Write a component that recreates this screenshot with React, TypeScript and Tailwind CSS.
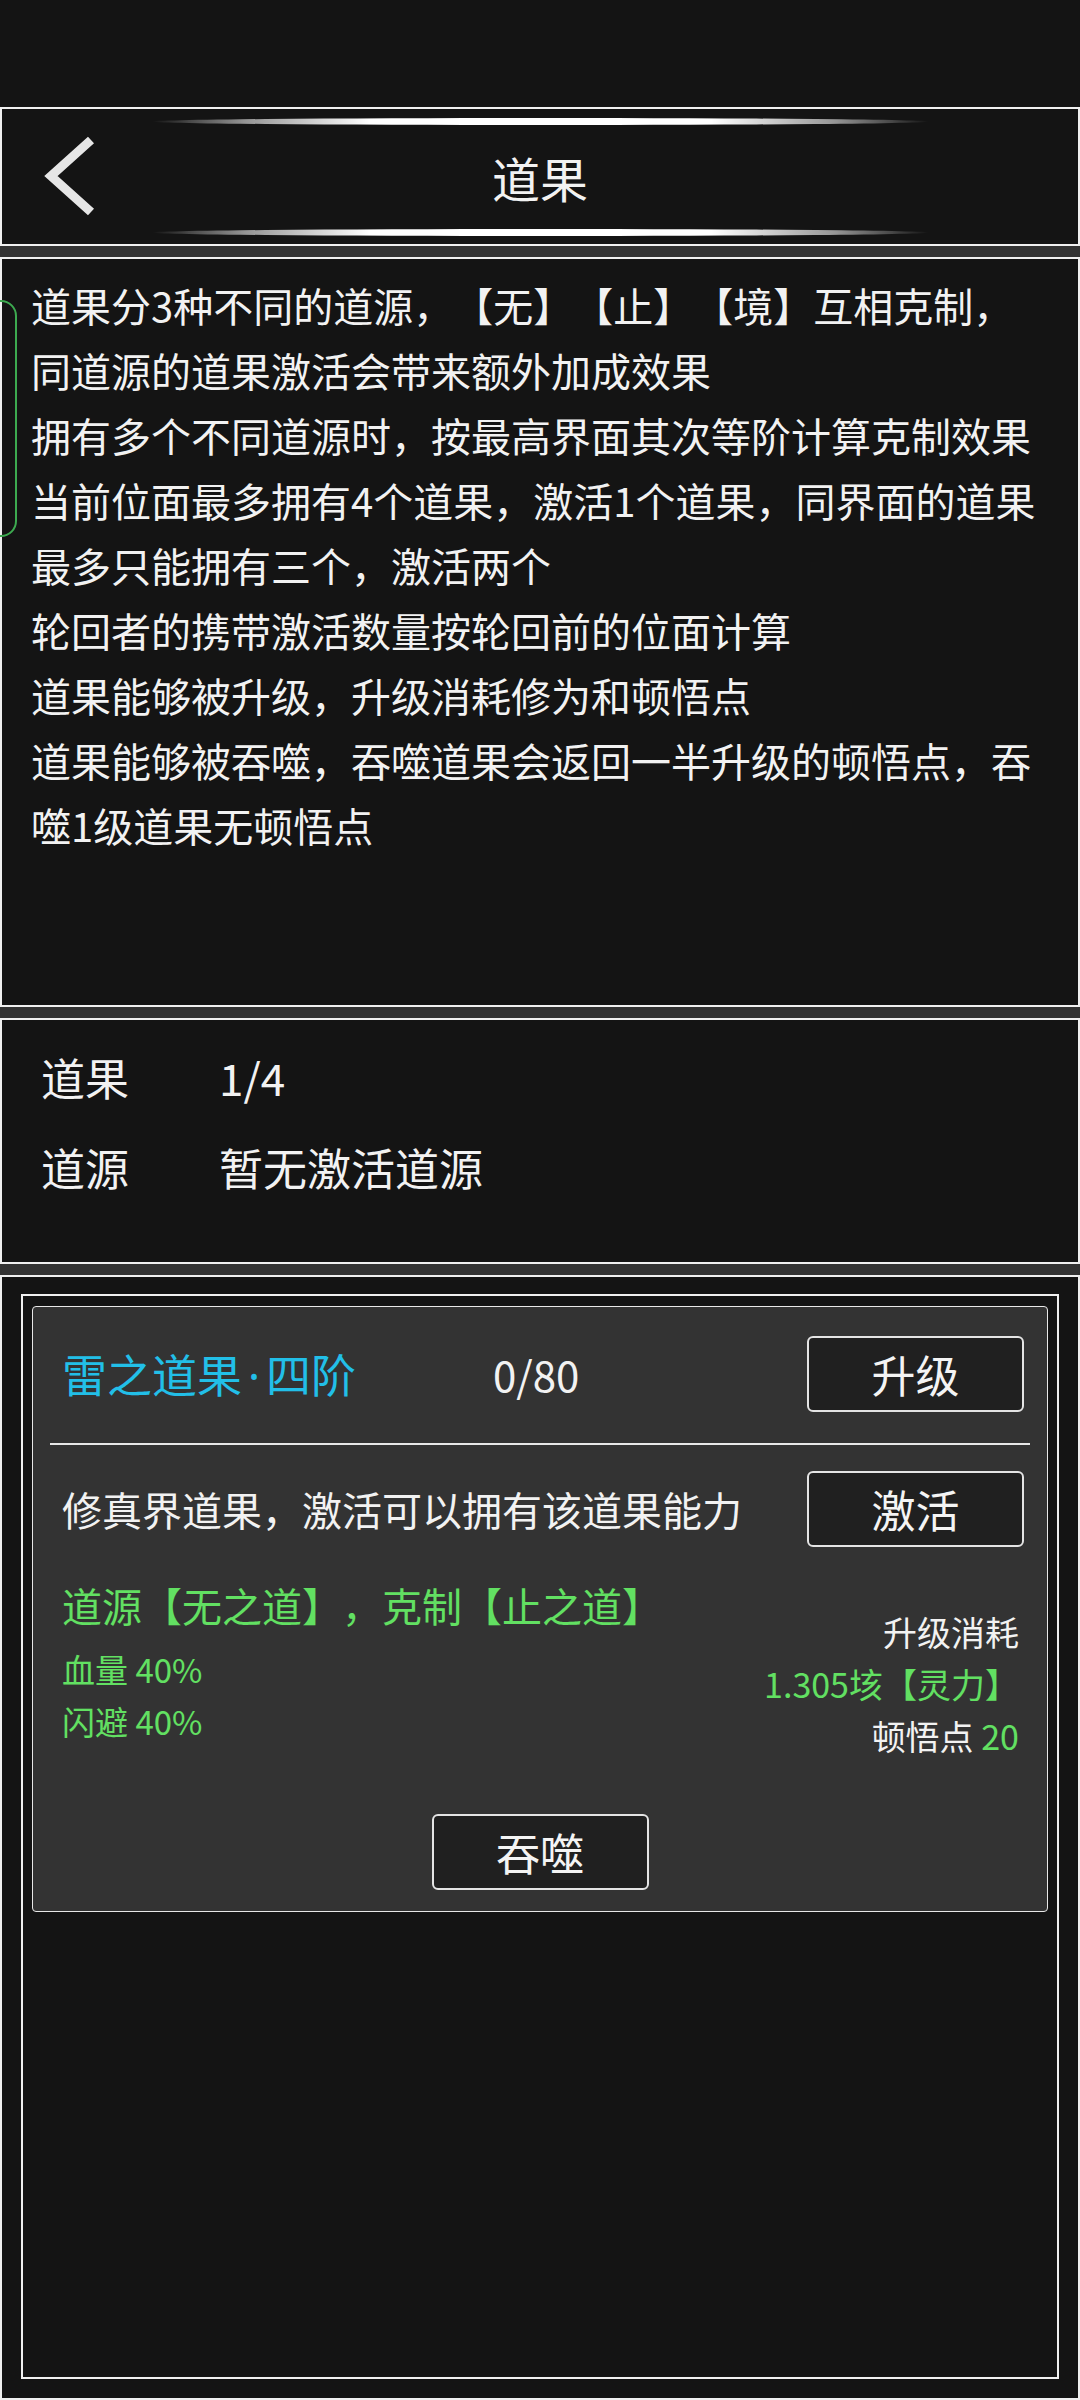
import type { JSX } from "react"

const descLines: string[] = [
  "道果分3种不同的道源，【无】【止】【境】互相克制，",
  "同道源的道果激活会带来额外加成效果",
  "拥有多个不同道源时，按最高界面其次等阶计算克制效果",
  "当前位面最多拥有4个道果，激活1个道果，同界面的道果",
  "最多只能拥有三个，激活两个",
  "轮回者的携带激活数量按轮回前的位面计算",
  "道果能够被升级，升级消耗修为和顿悟点",
  "道果能够被吞噬，吞噬道果会返回一半升级的顿悟点，吞",
  "噬1级道果无顿悟点",
]

const Glow = (): JSX.Element => (
  <div className="h-[7px] w-[777px] shrink-0 rounded-[50%] bg-[linear-gradient(90deg,rgba(255,255,255,0)_0%,rgba(255,255,255,0.55)_12%,#ffffff_28%,#ffffff_72%,rgba(255,255,255,0.55)_88%,rgba(255,255,255,0)_100%)]" />
)

const Divider = (): JSX.Element => <div className="h-[11px] shrink-0 bg-[#333333]" />

const GameButton = ({ label }: { label: string }): JSX.Element => (
  <button className="flex h-[76px] w-[217px] shrink-0 items-center justify-center rounded-[6px] border-2 border-[#e4e4e4] bg-[#202020] text-[44px] leading-none text-[#f4f4f4]">
    {label}
  </button>
)

const App = (): JSX.Element => {
  return (
    <div className="relative flex h-[2400px] w-[1080px] flex-col overflow-hidden bg-[#141414] font-['Noto_Sans_CJK_SC','Noto_Sans',sans-serif] text-[#f2f2f2] [text-spacing-trim:space-all]">
      <div className="h-[107px] shrink-0" />

      {/* header */}
      <header className="relative flex h-[139px] shrink-0 flex-col items-center border-2 border-[#f0f0f0] pt-[9px] pb-[8px]">
        <Glow />
        <div className="flex flex-1 items-center justify-center text-[48px] leading-none">道果</div>
        <Glow />
        <svg
          className="absolute left-[38px] top-[27px]"
          width="58"
          height="80"
          viewBox="0 0 58 80"
          fill="none"
        >
          <polyline
            points="51,4 11,40 51,76"
            stroke="#e6e6e6"
            strokeWidth="9"
            strokeLinejoin="miter"
            strokeLinecap="butt"
          />
        </svg>
      </header>

      <Divider />

      {/* rules */}
      <section className="h-[750px] shrink-0 border-2 border-[#f0f0f0] pt-[14px] pl-[29px] text-[40px] leading-[65px]">
        {descLines.map((line, idx) => (
          <div key={idx} className="whitespace-nowrap">
            {line}
          </div>
        ))}
      </section>

      <Divider />

      {/* summary */}
      <section className="h-[246px] shrink-0 border-2 border-[#f0f0f0] pt-[12px] pl-[39px] text-[44px]">
        <div className="flex h-[90px] items-center">
          <span className="w-[178px]">道果</span>
          <span>1/4</span>
        </div>
        <div className="flex h-[90px] items-center">
          <span className="w-[178px]">道源</span>
          <span>暂无激活道源</span>
        </div>
      </section>

      <Divider />

      {/* list */}
      <section className="flex-1 border-2 border-[#f0f0f0] px-[19px] pt-[17px]">
        <div className="h-[1085px] border-2 border-[#f0f0f0] px-[9px] pt-[10px]">
          <div className="flex h-[606px] flex-col rounded-[4px] border border-[#e8e8e8] bg-[#333333]">
            <div className="mt-[29px] flex h-[76px] items-center pr-[23px] pl-[29px]">
              <span className="w-[431px] text-[45px] leading-none text-[#22bfe8]">
                雷之道果<span className="px-[6px] font-['Noto_Sans',sans-serif]">·</span>四阶
              </span>
              <span className="flex-1 text-[42px] leading-none">0/80</span>
              <GameButton label="升级" />
            </div>

            <div className="mx-[17px] mt-[31px] h-[2px] bg-[#e8e8e8]" />

            <div className="mt-[26px] flex h-[76px] items-center justify-between pr-[23px] pl-[29px]">
              <span className="text-[40px] leading-none">修真界道果，激活可以拥有该道果能力</span>
              <GameButton label="激活" />
            </div>

            <div className="mt-[32px] flex justify-between pr-[28px] pl-[29px]">
              <div className="flex flex-col text-[#62e062]">
                <span className="text-[40px] leading-[52px]">道源【无之道】，克制【止之道】</span>
                <span className="mt-[12px] text-[33px] leading-[52px]">血量 40%</span>
                <span className="text-[33px] leading-[52px]">闪避 40%</span>
              </div>
              <div className="flex flex-col items-end pt-[27px] text-right text-[34px] leading-[52px]">
                <span>升级消耗</span>
                <span className="text-[#62e062]">1.305垓【灵力】</span>
                <span>
                  顿悟点 <span className="text-[#62e062]">20</span>
                </span>
              </div>
            </div>

            <div className="mt-[52px] flex justify-center">
              <GameButton label="吞噬" />
            </div>
          </div>
        </div>
      </section>

      {/* side bracket */}
      <div className="absolute top-[300px] left-[-22px] h-[237px] w-[39px] rounded-[16px] border-2 border-[#3daa50]" />
    </div>
  )
}

export default App
